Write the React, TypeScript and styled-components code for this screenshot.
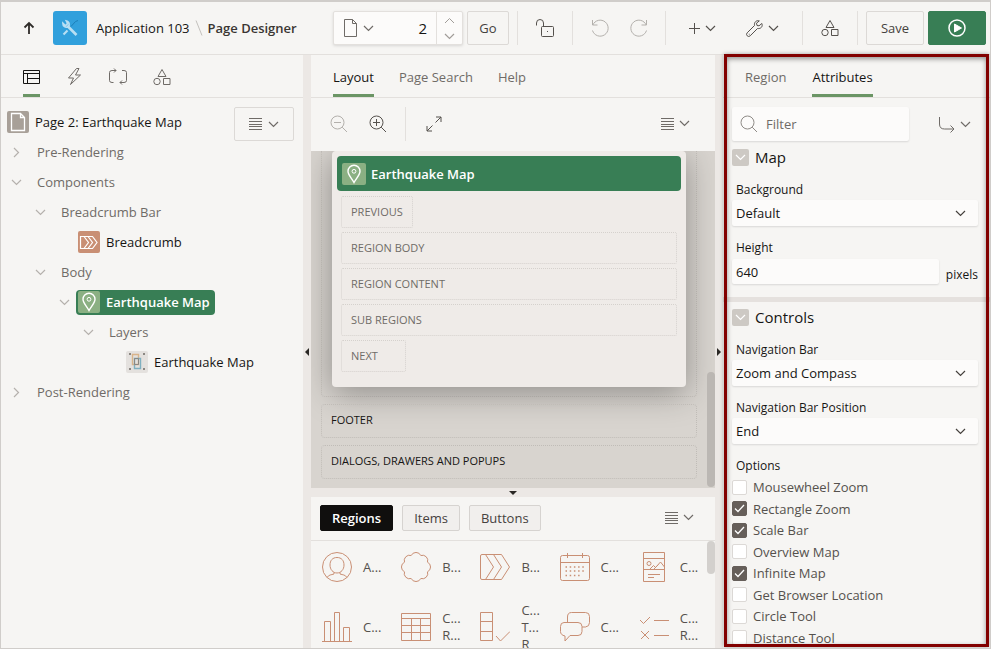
import React, { useState } from "react";
import styled, { createGlobalStyle } from "styled-components";

const c = {
  bg: "#f6f5f3",
  field: "#fcfbfa",
  line: "#e3e0dd",
  strip: "#ece8e5",
  text: "#161513",
  soft: "#6f6b67",
  faint: "#b3b0ac",
  green: "#387e55",
  tab: "#6b9565",
  clay: "#c98f74",
};

const GlobalStyle = createGlobalStyle`
  * { box-sizing: border-box; }
  body { margin: 0; background: ${c.bg}; }
  body, button, input, select {
    font-family: "Open Sans", "Noto Sans", sans-serif;
    font-size: 13px;
    line-height: 18px;
    color: ${c.text};
  }
  button { margin: 0; padding: 0; border: 0; background: none; cursor: pointer; }
  ul { list-style: none; margin: 0; padding: 0; }
`;

const Svg = styled.svg`
  display: block;
  flex: none;
  fill: none;
  stroke: currentColor;
  stroke-width: 1;
`;

type IconProps = { w: number; h: number; children: React.ReactNode };
const Icon = ({ w, h, children }: IconProps) => (
  <Svg width={w} height={h} viewBox={`0 0 ${w} ${h}`} aria-hidden="true">
    {children}
  </Svg>
);

const ChevronDown = () => (
  <Icon w={11} h={7}><path strokeWidth="1.200" d="M1 1l4.500 4.500L10 1" /></Icon>
);
const ChevronUp = () => (
  <Icon w={11} h={7}><path d="M1 6l4.500-4.500L10 6" /></Icon>
);
const ChevronRight = () => (
  <Icon w={7} h={11}><path strokeWidth="1.200" d="M1 1l4.500 4.500L1 10" /></Icon>
);
const Bars = () => (
  <Icon w={13} h={12}><path d="M0 .5h13M0 3.5h13M0 6.5h13M0 8.5h13M0 11.5h13" /></Icon>
);
const Shapes = () => (
  <Icon w={18} h={18}>
    <path d="M9 1.500l4 7H5z" />
    <circle cx="4" cy="13.500" r="3.200" />
    <path d="M10.500 10.500h6.500v6h-6.500z" />
  </Icon>
);
const Pin = () => (
  <Icon w={22} h={22}>
    <path strokeWidth="1.400" d="M11 19.500C9 15.500 5 12 5 8.300a6 6 0 0 1 12 0C17 12 13 15.500 11 19.500z" />
    <circle cx="11" cy="8.300" r="1.900" />
  </Icon>
);
const PageSheet = () => (
  <Icon w={22} h={22}>
    <path strokeWidth="1.300" d="M4.500 2.500h9l4 4v13h-13zM13.500 2.500v4h4" />
  </Icon>
);
const BreadcrumbMini = () => (
  <Icon w={22} h={22}>
    <path strokeWidth="1.200" d="M2.500 5.500h12l4.500 6-4.500 6h-12zM6 5.500l4.500 6-4.500 6M10 5.500l4.500 6-4.500 6" />
  </Icon>
);
const LayerMini = () => (
  <Icon w={22} h={22}>
    <path stroke="#d9b48a" strokeWidth="1.400" d="M6.500 3.500h6v10h-6z" />
    <path stroke="#7fb0c0" strokeWidth="1.400" d="M8.500 7.500h6v10h-6z" />
    <path stroke="#8b8782" d="M8.500 7.500h4v6h-4z" />
    <path stroke="#8b8782" strokeWidth="2" d="M3 3h2M17 3h2M3 18h2M17 18h2" />
  </Icon>
);

const Shell = styled.div`
  position: relative;
  height: 100vh;
  display: flex;
  flex-direction: column;
  overflow: hidden;
  background: ${c.bg};
  border: 1px solid #d0cdca;
  border-top-width: 2px;
`;

const Header = styled.header`
  flex: none;
  display: flex;
  align-items: center;
  height: 53px;
  padding: 0 4px 0 14px;
  border-bottom: 1px solid ${c.line};
`;
const Crumbs = styled.nav`
  flex: 1;
  display: flex;
  align-items: center;
  min-width: 0;
  white-space: nowrap;
`;
const UpButton = styled.button`
  width: 28px;
  height: 34px;
  display: grid;
  place-items: center;
  margin-right: 10px;
  color: #2f2c29;
`;
const AppTile = styled.span`
  display: grid;
  place-items: center;
  width: 34px;
  height: 34px;
  margin-right: 9px;
  border-radius: 3px;
  background: #31a0dc;
  color: #b9dff3;
`;
const CrumbLink = styled.a`
  color: ${c.text};
  text-decoration: none;
`;
const CrumbSlash = styled.span`
  width: 18px;
  display: grid;
  place-items: center;
  color: #c4c0bc;
`;
const CrumbCurrent = styled.strong`
  font-weight: 600;
  font-size: 13px;
  color: #3a3632;
`;
const PageSelector = styled.div`
  display: flex;
  width: 130px;
  height: 34px;
  border: 1px solid ${c.line};
  border-radius: 2px;
  background: ${c.field};
  box-shadow: 0 1px 3px rgba(0, 0, 0, 0.12);
`;
const PagePick = styled.button`
  display: flex;
  align-items: center;
  gap: 6px;
  padding-left: 10px;
  color: ${c.soft};
`;
const PageNumber = styled.input`
  flex: 1;
  min-width: 0;
  padding: 0 9px;
  border: 0;
  background: none;
  text-align: right;
  font-size: 15px;
`;
const Stepper = styled.div`
  display: grid;
  width: 26px;
  border-left: 1px solid ${c.line};
  color: #a19d99;
  button { display: grid; place-items: center; color: inherit; }
`;
const Button = styled.button<{ $w: number; $solid?: boolean }>`
  display: grid;
  place-items: center;
  width: ${(p) => p.$w}px;
  height: 34px;
  border: 1px solid ${(p) => (p.$solid ? c.green : "#dcd9d6")};
  border-radius: 2px;
  background: ${(p) => (p.$solid ? c.green : c.bg)};
  color: ${(p) => (p.$solid ? "#fff" : "#45413d")};
`;
const ToolGroup = styled.div<{ $w: number; $gap?: number; $muted?: boolean }>`
  display: flex;
  align-items: center;
  justify-content: center;
  gap: ${(p) => p.$gap ?? 0}px;
  width: ${(p) => p.$w}px;
  height: 34px;
  border-left: 1px solid ${c.line};
  color: ${(p) => (p.$muted ? c.faint : "#55514d")};
`;
const IconButton = styled.button`
  display: flex;
  align-items: center;
  gap: 5px;
  height: 34px;
  color: inherit;
`;
const Actions = styled.div`
  display: flex;
  gap: 4px;
`;
const SelectorActions = styled(Actions)`
  margin-right: 8px;
`;
const SaveActions = styled(Actions)`
  padding-left: 8px;
  border-left: 1px solid ${c.line};
`;

const Workspace = styled.div`
  flex: 1;
  min-height: 0;
  display: grid;
  grid-template-columns: 302px 8px minmax(0, 1fr) 8px 267px;
`;
const Column = styled.section`
  display: flex;
  flex-direction: column;
  min-width: 0;
  min-height: 0;
  overflow: hidden;
`;
const Splitter = styled.button<{ $row?: boolean }>`
  flex: none;
  display: grid;
  place-items: center;
  min-height: ${(p) => (p.$row ? "9px" : "0")};
  background: ${c.strip};
  color: #2b2825;
`;
const Tabs = styled.div<{ $gap: number }>`
  flex: none;
  display: flex;
  gap: ${(p) => p.$gap}px;
  height: 43px;
  padding-left: 22px;
  border-bottom: 1px solid ${c.line};
`;
const Tab = styled.button<{ $on?: boolean }>`
  display: flex;
  align-items: center;
  height: 42px;
  padding-top: 4px;
  border-bottom: 3px solid ${(p) => (p.$on ? c.tab : "transparent")};
  color: ${(p) => (p.$on ? c.text : c.soft)};
`;

const TreeArea = styled.div`
  display: flex;
  align-items: flex-start;
  padding: 9px 9px 0 4px;
`;
const Tree = styled.ul`
  flex: 1;
  min-width: 0;
`;
const TreeRow = styled.li<{ $level: number }>`
  display: flex;
  align-items: center;
  height: 30px;
  padding-left: ${(p) => p.$level * 24}px;
  white-space: nowrap;
`;
const Twisty = styled.button`
  flex: none;
  display: grid;
  place-items: center;
  width: 23px;
  height: 24px;
  color: #b5b1ad;
`;
const LeafIndent = styled.span`
  flex: none;
  width: 23px;
`;
const Branch = styled.span`
  padding-left: 9px;
  color: ${c.soft};
`;
const Leaf = styled.span<{ $on?: boolean }>`
  display: flex;
  align-items: center;
  gap: 6px;
  height: 25px;
  padding: 0 5px 0 2px;
  border-radius: 4px;
  background: ${(p) => (p.$on ? c.green : "transparent")};
  color: ${(p) => (p.$on ? "#fff" : c.text)};
  font-weight: ${(p) => (p.$on ? 600 : 400)};
`;
const Tile = styled.span<{ $bg: string; $w?: number }>`
  flex: none;
  display: grid;
  place-items: center;
  width: ${(p) => p.$w ?? 22}px;
  height: 22px;
  border-radius: 2px;
  background: ${(p) => p.$bg};
  color: #fff;
`;
const MenuButton = styled.button`
  flex: none;
  display: flex;
  align-items: center;
  justify-content: center;
  gap: 6px;
  width: 60px;
  height: 34px;
  border: 1px solid #dcd9d6;
  border-radius: 2px;
  color: ${c.soft};
`;

const CanvasTools = styled.div`
  flex: none;
  display: flex;
  align-items: center;
  height: 53px;
  padding: 0 25px 2px 19px;
  color: #55514d;
`;
const ZoomOutButton = styled(IconButton)`
  color: ${c.faint};
  margin-right: 21px;
`;
const ExpandButton = styled(IconButton)`
  margin-left: 18px;
  padding-left: 20px;
  border-left: 1px solid ${c.line};
`;
const EndMenu = styled(IconButton)`
  margin-left: auto;
  color: ${c.soft};
`;
const Canvas = styled.div`
  position: relative;
  flex: 1;
  min-height: 0;
  overflow: hidden;
  padding: 0 18px 0 10px;
  background: #d8d4cf;
`;
const BodySlot = styled.div`
  padding: 0 10px 9px;
  border: 1px dotted #c5c1bc;
  border-top: 0;
  border-radius: 0 0 4px 4px;
`;
const RegionCard = styled.div`
  padding: 5px 5px 15px;
  border-radius: 4px;
  background: #efebe8;
  box-shadow: 0 6px 32px rgba(0, 0, 0, 0.34);
`;
const RegionTitle = styled.div`
  display: flex;
  align-items: center;
  gap: 5px;
  height: 35px;
  padding-left: 5px;
  border-radius: 4px;
  background: ${c.green};
  color: #fff;
  font-weight: 600;
`;
const SlotList = styled.div`
  display: flex;
  flex-direction: column;
  align-items: flex-start;
  gap: 4px;
  padding: 5px 4px 0;
`;
const Slot = styled.div<{ $wide?: boolean }>`
  width: ${(p) => (p.$wide ? "100%" : "auto")};
  min-width: 65px;
  height: 32px;
  padding: 0 9px;
  border: 1px dotted #d5d1cd;
  border-radius: 2px;
  font-size: 11px;
  line-height: 29px;
  color: ${c.soft};
`;
const PageSlot = styled.div`
  height: 34px;
  margin-top: 7px;
  padding: 0 9px;
  border: 1px dotted #c0bcb7;
  border-radius: 4px;
  font-size: 11px;
  line-height: 30px;
`;
const Thumb = styled.div<{ $h: number; $end?: boolean }>`
  position: absolute;
  right: 0;
  ${(p) => (p.$end ? "bottom: 1px;" : "top: 0;")}
  width: 8px;
  height: ${(p) => p.$h}px;
  border-radius: 4px;
  background: ${(p) => (p.$end ? "#bbb7b3" : "#d3d0cd")};
`;

const GalleryBar = styled.div`
  flex: none;
  display: flex;
  align-items: center;
  gap: 9px;
  height: 44px;
  padding: 0 21px 2px 9px;
  border-bottom: 1px solid ${c.line};
`;
const Chip = styled.button<{ $on?: boolean }>`
  height: 26px;
  padding: 0 11px;
  border: 1px solid ${(p) => (p.$on ? "#100f0e" : "#d6d3d0")};
  border-radius: 2px;
  background: ${(p) => (p.$on ? "#100f0e" : "#f1efed")};
  color: ${(p) => (p.$on ? "#fff" : "#45413d")};
  font-weight: ${(p) => (p.$on ? 600 : 400)};
`;
const Gallery = styled.div`
  position: relative;
  flex: none;
  display: grid;
  grid-template-columns: repeat(5, minmax(0, 1fr));
  grid-auto-rows: 52px;
  row-gap: 8px;
  height: 107px;
  padding-right: 8px;
  overflow: hidden;
`;
const GalleryItem = styled.button`
  display: flex;
  align-items: center;
  gap: 11px;
  padding-left: 11px;
  color: ${c.clay};
  text-align: left;
`;
const GalleryLabel = styled.span`
  display: grid;
  line-height: 17px;
  color: #55514d;
`;

const FilterRow = styled.div`
  flex: none;
  display: flex;
  align-items: center;
  justify-content: space-between;
  padding: 9px 19px 1px 9px;
  color: ${c.soft};
`;
const FilterBox = styled.label`
  display: flex;
  align-items: center;
  gap: 8px;
  width: 177px;
  height: 34px;
  padding-left: 8px;
  border-radius: 2px;
  background: ${c.field};
  box-shadow: 0 1px 2px rgba(0, 0, 0, 0.12);
  color: #8f8b87;
`;
const FilterInput = styled.input`
  flex: 1;
  min-width: 0;
  padding: 0;
  border: 0;
  background: none;
  &::placeholder { color: ${c.soft}; opacity: 1; }
`;
const Group = styled.section`
  padding: 4px 12px 13px 9px;
  & + & { border-top: 5px solid #e5e1de; }
`;
const GroupTitle = styled.h2`
  display: flex;
  align-items: center;
  gap: 6px;
  height: 22px;
  margin: 0 0 13px;
  font-size: 15px;
  line-height: 22px;
  font-weight: 500;
`;
const Fold = styled.button`
  display: grid;
  place-items: center;
  width: 17px;
  height: 17px;
  border-radius: 2px;
  background: #cdc9c4;
  color: #fff;
`;
const Field = styled.div`
  display: flex;
  flex-direction: column;
  margin-bottom: 13px;
`;
const FieldLabel = styled.label`
  display: block;
  padding-left: 4px;
  font-size: 12px;
  line-height: 18px;
`;
const FieldLine = styled.div`
  display: flex;
  align-items: flex-end;
  gap: 7px;
  margin-top: 2px;
`;
const TextInput = styled.input`
  flex: 1;
  min-width: 0;
  height: 25px;
  padding: 0 4px;
  border: 0;
  border-radius: 2px;
  background: ${c.field};
  box-shadow: 0 1px 2px rgba(0, 0, 0, 0.12);
`;
const Unit = styled.span`
  font-size: 12px;
  line-height: 18px;
`;
const SelectBox = styled.div`
  display: grid;
  margin-top: 1px;
  align-items: center;
  color: #45413d;
  & > * { grid-area: 1 / 1; }
  & > svg { justify-self: end; margin-right: 12px; pointer-events: none; }
`;
const Select = styled.select`
  appearance: none;
  width: 100%;
  height: 26px;
  padding: 0 4px;
  border: 0;
  border-radius: 2px;
  background: ${c.field};
  box-shadow: 0 1px 2px rgba(0, 0, 0, 0.12);
`;
const Options = styled.fieldset`
  display: grid;
  grid-auto-rows: 22px 21px;
  margin: 0;
  padding: 0;
  border: 0;
`;
const Legend = styled.legend`
  padding: 0 4px 1px;
  font-size: 12px;
  line-height: 18px;
`;
const Option = styled.label`
  display: flex;
  align-items: center;
  gap: 6px;
  color: #55514d;
`;
const CheckBox = styled.span`
  display: grid;
  width: 15px;
  height: 15px;
  color: #fff;
  & > * { grid-area: 1 / 1; }
  & > svg { pointer-events: none; }
`;
const Check = styled.input`
  appearance: none;
  width: 15px;
  height: 15px;
  margin: 0;
  border: 1px solid #dcd9d6;
  border-radius: 2px;
  background: #fff;
  &:checked { border-color: #665f5a; background: #665f5a; }
`;
const Callout = styled.div`
  position: absolute;
  top: 52px;
  right: 1px;
  bottom: 1px;
  width: 265px;
  border: 3px solid #820000;
  box-shadow: 0 0 4px rgba(0, 0, 0, 0.35), inset 0 2px 5px rgba(0, 0, 0, 0.4);
  pointer-events: none;
`;

const Magnifier = ({ sign }: { sign?: "minus" | "plus" }) => (
  <Icon w={18} h={18}>
    <circle cx="7.500" cy="7.500" r="6.500" />
    <path d="M12.200 12.200L17 17" />
    {sign && <path d="M4 7.500h7" />}
    {sign === "plus" && <path d="M7.500 4v7" />}
  </Icon>
);

const gallery: { name: string; lines: string[]; art: React.ReactNode }[] = [
  { name: "Avatar", lines: ["A..."], art: (
    <><circle cx="15" cy="15" r="14.500" /><path d="M15 5.500c4.500 0 7 3 7 7.500s-3 8-7 8-7-3.500-7-8 2.500-7.500 7-7.500zM5 25.500c2-3 4-2.500 7-3.500v-1.500M25 25.500c-2-3-4-2.500-7-3.500v-1.500" /></>
  ) },
  { name: "Badge List", lines: ["B..."], art: (
    <path d="M10.200 3.500A5.300 5.300 0 0 1 19.800 3.500A5.300 5.300 0 0 1 26.500 10.200A5.300 5.300 0 0 1 26.500 19.800A5.300 5.300 0 0 1 19.800 26.500A5.300 5.300 0 0 1 10.200 26.500A5.300 5.300 0 0 1 3.500 19.800A5.300 5.300 0 0 1 3.500 10.200A5.300 5.300 0 0 1 10.200 3.500z" />
  ) },
  { name: "Breadcrumb", lines: ["B..."], art: (
    <path d="M.500 4q0-1.500 1.500-1.500h19.500L29.500 15l-8 12.500H2q-1.500 0-1.500-1.500zM5.500 2.500L13.500 15l-8 12.500M13.500 2.500L21.500 15l-8 12.500" />
  ) },
  { name: "Calendar", lines: ["C..."], art: (
    <><rect x=".500" y="3.500" width="29" height="25" rx="2" /><path d="M.500 10.500h29M7.500 1v5M22.500 1v5" /><path strokeWidth="1.500" strokeDasharray="1.500 2.700" d="M5.500 15H25M5.500 19H25M5.500 23.500H21" /></>
  ) },
  { name: "Cards", lines: ["C..."], art: (
    <path d="M4.500.500h21v29h-21zM4.500 6.500h21M4.500 17.500h21M8 11.500a2 2 0 1 0 4 0a2 2 0 1 0-4 0M10.500 17.500l4-4 2 2 5-5.500 4 5M14.500 17.500l5-5M9 22.500h12M9 25.500h6" />
  ) },
  { name: "Chart", lines: ["C..."], art: (
    <path d="M0 29.500h30M2.500 29.500v-20h6v20M12.500 29.500V.500h5v29M21.500 29.500v-14h6v14" />
  ) },
  { name: "Classic Report", lines: ["C...", "R..."], art: (
    <path d="M.500 1.500h29v27H.500zM.500 6.500h29M.500 13.500h29M.500 20.500h29M10.500 6.500v22M19.500 6.500v22" />
  ) },
  { name: "Column Toggle Report", lines: ["C...", "T...", "R"], art: (
    <path d="M.500.500h12v28H.500zM.500 9.500h12M.500 19.500h12M16 24l4.500 5L30 19.500" />
  ) },
  { name: "Comments", lines: ["C..."], art: (
    <><path d="M4 10.500h14q4 0 4 4v5q0 4-4 4h-8l-5 5.500V24q-4.500-1-4.500-4.500v-5q0-4 3.500-4z" /><path d="M7.500 10.500V5q0-4.500 4-4.500h14q4 0 4 4v6q0 4-4 4.500h-3.500" /></>
  ) },
  { name: "Content Row", lines: ["C...", "R..."], art: (
    <path d="M1 8l3.500 3.500L11 5M15 8.500h15M2 19l8 8M10 19l-8 8M15 23.500h15" />
  ) },
];

type SelectFieldProps = { id: string; label: string; value: string };
const SelectField = ({ id, label, value }: SelectFieldProps) => (
  <Field>
    <FieldLabel htmlFor={id}>{label}</FieldLabel>
    <SelectBox>
      <Select id={id} defaultValue={value}>
        <option>{value}</option>
      </Select>
      <ChevronDown />
    </SelectBox>
  </Field>
);

const initialOptions = [
  { label: "Mousewheel Zoom", on: false },
  { label: "Rectangle Zoom", on: true },
  { label: "Scale Bar", on: true },
  { label: "Overview Map", on: false },
  { label: "Infinite Map", on: true },
  { label: "Get Browser Location", on: false },
  { label: "Circle Tool", on: false },
  { label: "Distance Tool", on: false },
];

const TopBar = () => (
  <Header>
    <Crumbs aria-label="Breadcrumb">
      <UpButton aria-label="Up">
        <Icon w={12} h={14}><path strokeWidth="1.800" d="M6 13V2M1.500 6.500L6 2l4.500 4.500" /></Icon>
      </UpButton>
      <AppTile>
        <Icon w={18} h={18}>
          <path stroke="#1b7fb8" d="M17 1.500l-2.500 1-4.500 5" />
          <path strokeWidth="2.200" d="M2.500 15.500L6.500 11.500" />
          <path strokeWidth="2.600" d="M7 7.500l8.500 8.500" />
          <path strokeWidth="1.800" d="M5.500 2c2 .500 3 2.500 2.500 4.500L6.500 8C4 8.500 2 7 2 4.500l2 2 1.800-.700.700-1.800z" />
        </Icon>
      </AppTile>
      <CrumbLink href="#app">Application 103</CrumbLink>
      <CrumbSlash><Icon w={8} h={16}><path d="M1 .500l6 15" /></Icon></CrumbSlash>
      <CrumbCurrent>Page Designer</CrumbCurrent>
    </Crumbs>
    <SelectorActions>
      <PageSelector>
        <PagePick aria-label="Page list">
          <Icon w={13} h={18}><path d="M.500.500h8l4 4v13H.500zM8.500.500v4h4" /></Icon>
          <ChevronDown />
        </PagePick>
        <PageNumber aria-label="Page number" defaultValue="2" />
        <Stepper>
          <button aria-label="Next page"><ChevronUp /></button>
          <button aria-label="Previous page"><ChevronDown /></button>
        </Stepper>
      </PageSelector>
      <Button $w={42}>Go</Button>
    </SelectorActions>
    <ToolGroup $w={55}>
      <IconButton aria-label="Lock page">
        <Icon w={18} h={18}>
          <rect x="5.500" y="7.500" width="12" height="10" rx="1" />
          <path d="M.500 6.500V4a3.500 3.500 0 0 1 7 0v3.500M11 12.500h1" />
        </Icon>
      </IconButton>
    </ToolGroup>
    <ToolGroup $w={93} $gap={21} $muted>
      <IconButton aria-label="Undo">
        <Icon w={18} h={18}><path d="M1.500 1v5h5M1.800 6a8 8 0 1 1-.3 5.500" /></Icon>
      </IconButton>
      <IconButton aria-label="Redo">
        <Icon w={18} h={18}><path d="M16.500 1v5h-5M16.200 6a8 8 0 1 0 .3 5.500" /></Icon>
      </IconButton>
    </ToolGroup>
    <ToolGroup $w={137} $gap={30}>
      <IconButton aria-label="Create">
        <Icon w={11} h={11}><path d="M5.500 0v11M0 5.500h11" /></Icon>
        <ChevronDown />
      </IconButton>
      <IconButton aria-label="Utilities">
        <Icon w={17} h={17}>
          <path d="M15.900 3.500l-2.900 2.300-2-.3-.5-2.300L13.300.900C10.500 0 8 2 8.500 5.500L1.200 12.800a2.100 2.100 0 0 0 3 3L11.500 8.500c3.500.5 5.500-2 4.400-5zM2.800 14.200h.8" />
        </Icon>
        <ChevronDown />
      </IconButton>
    </ToolGroup>
    <ToolGroup $w={55}>
      <IconButton aria-label="Shared components"><Shapes /></IconButton>
    </ToolGroup>
    <SaveActions>
      <Button $w={58}>Save</Button>
      <Button $w={58} $solid aria-label="Save and run page">
        <Icon w={18} h={18}>
          <circle cx="9" cy="9" r="8" strokeWidth="1.500" />
          <path d="M6.500 5l7 4-7 4z" fill="currentColor" />
        </Icon>
      </Button>
    </SaveActions>
  </Header>
);

const BranchRow = ({ level, label, open }: { level: number; label: string; open?: boolean }) => (
  <TreeRow $level={level}>
    <Twisty aria-label={`Toggle ${label}`}>{open ? <ChevronDown /> : <ChevronRight />}</Twisty>
    <Branch>{label}</Branch>
  </TreeRow>
);

const TreePanel = () => (
  <Column>
    <Tabs $gap={26}>
      <Tab $on aria-label="Rendering">
        <Icon w={17} h={14}><path d="M.500.500h16v13H.500zM.500 3.500h16M4.500 3.500v10M4.500 8.500h12" /></Icon>
      </Tab>
      <Tab aria-label="Dynamic actions">
        <Icon w={17} h={17}><path d="M10.500.500L2.500 10h5l-3 6.500L14.500 7H9.500L13 .500z" /></Icon>
      </Tab>
      <Tab aria-label="Processing">
        <Icon w={18} h={17}>
          <path d="M7 2.500H3q-2.500 0-2.500 2v8q0 2 2.500 2h1.500M5 .500l2 2-2 2M11 14.500h4q2.500 0 2.500-2v-8q0-2-2.500-2h-2M13 12.500l-2 2 2 2" />
        </Icon>
      </Tab>
      <Tab aria-label="Page shared components"><Shapes /></Tab>
    </Tabs>
    <TreeArea>
      <Tree>
        <TreeRow $level={0}>
          <Leaf><Tile $bg="#a8a098"><PageSheet /></Tile>Page 2: Earthquake Map</Leaf>
        </TreeRow>
        <BranchRow level={0} label="Pre-Rendering" />
        <BranchRow level={0} label="Components" open />
        <BranchRow level={1} label="Breadcrumb Bar" open />
        <TreeRow $level={2}>
          <LeafIndent />
          <Leaf><Tile $bg={c.clay}><BreadcrumbMini /></Tile>Breadcrumb</Leaf>
        </TreeRow>
        <BranchRow level={1} label="Body" open />
        <TreeRow $level={2}>
          <Twisty aria-label="Toggle Earthquake Map"><ChevronDown /></Twisty>
          <Leaf $on><Tile $bg="#8bb083"><Pin /></Tile>Earthquake Map</Leaf>
        </TreeRow>
        <BranchRow level={3} label="Layers" open />
        <TreeRow $level={4}>
          <LeafIndent />
          <Leaf><Tile $bg="#e4e1de"><LayerMini /></Tile>Earthquake Map</Leaf>
        </TreeRow>
        <BranchRow level={0} label="Post-Rendering" />
      </Tree>
      <MenuButton aria-label="Tree menu"><Bars /><ChevronDown /></MenuButton>
    </TreeArea>
  </Column>
);

const LayoutPanel = () => (
  <Column>
    <Tabs $gap={25}>
      <Tab $on>Layout</Tab>
      <Tab>Page Search</Tab>
      <Tab>Help</Tab>
    </Tabs>
    <CanvasTools>
      <ZoomOutButton aria-label="Zoom out"><Magnifier sign="minus" /></ZoomOutButton>
      <IconButton aria-label="Zoom in"><Magnifier sign="plus" /></IconButton>
      <ExpandButton aria-label="Expand">
        <Icon w={16} h={16}><path d="M1 15l5.500-5.500M9.500 6.500L15 1M10 1h5v5M6 15H1v-5" /></Icon>
      </ExpandButton>
      <EndMenu aria-label="Layout menu"><Bars /><ChevronDown /></EndMenu>
    </CanvasTools>
    <Canvas>
      <BodySlot>
        <RegionCard>
          <RegionTitle><Tile $bg="#8bb083" $w={24}><Pin /></Tile>Earthquake Map</RegionTitle>
          <SlotList>
            <Slot>PREVIOUS</Slot>
            <Slot $wide>REGION BODY</Slot>
            <Slot $wide>REGION CONTENT</Slot>
            <Slot $wide>SUB REGIONS</Slot>
            <Slot>NEXT</Slot>
          </SlotList>
        </RegionCard>
      </BodySlot>
      <PageSlot>FOOTER</PageSlot>
      <PageSlot>DIALOGS, DRAWERS AND POPUPS</PageSlot>
      <Thumb $h={115} $end />
    </Canvas>
    <Splitter $row aria-label="Collapse gallery">
      <Icon w={8} h={4}><path stroke="none" fill="currentColor" d="M0 0h8L4 4z" /></Icon>
    </Splitter>
    <GalleryBar>
      <Chip $on>Regions</Chip>
      <Chip>Items</Chip>
      <Chip>Buttons</Chip>
      <EndMenu aria-label="Gallery menu"><Bars /><ChevronDown /></EndMenu>
    </GalleryBar>
    <Gallery>
      {gallery.map((g) => (
        <GalleryItem key={g.name} title={g.name}>
          <Icon w={30} h={30}>{g.art}</Icon>
          <GalleryLabel>
            {g.lines.map((line) => <span key={line}>{line}</span>)}
          </GalleryLabel>
        </GalleryItem>
      ))}
      <Thumb $h={33} />
    </Gallery>
  </Column>
);

const PropertyPanel = () => {
  const [options, setOptions] = useState(initialOptions);
  const toggle = (label: string) =>
    setOptions(options.map((o) => (o.label === label ? { ...o, on: !o.on } : o)));
  return (
    <Column>
      <Tabs $gap={26}>
        <Tab>Region</Tab>
        <Tab $on>Attributes</Tab>
      </Tabs>
      <FilterRow>
        <FilterBox>
          <Magnifier />
          <FilterInput aria-label="Filter" placeholder="Filter" />
        </FilterBox>
        <IconButton aria-label="Go to group">
          <Icon w={17} h={17}><path d="M1.500 1v7q0 5 5 5h9M12.500 9.500l3.500 3.500-3.500 3.500" /></Icon>
          <ChevronDown />
        </IconButton>
      </FilterRow>
      <Group>
        <GroupTitle><Fold aria-label="Toggle Map"><ChevronDown /></Fold>Map</GroupTitle>
        <SelectField id="background" label="Background" value="Default" />
        <FieldLabel htmlFor="height">Height</FieldLabel>
        <FieldLine>
          <TextInput id="height" defaultValue="640" />
          <Unit>pixels</Unit>
        </FieldLine>
      </Group>
      <Group>
        <GroupTitle><Fold aria-label="Toggle Controls"><ChevronDown /></Fold>Controls</GroupTitle>
        <SelectField id="nav-bar" label="Navigation Bar" value="Zoom and Compass" />
        <SelectField id="nav-position" label="Navigation Bar Position" value="End" />
        <Options>
          <Legend>Options</Legend>
          {options.map((o) => (
            <Option key={o.label}>
              <CheckBox>
                <Check type="checkbox" checked={o.on} onChange={() => toggle(o.label)} />
                {o.on && <Icon w={15} h={15}><path strokeWidth="1.300" d="M3 7.500l3 3 6-6.500" /></Icon>}
              </CheckBox>
              {o.label}
            </Option>
          ))}
        </Options>
      </Group>
    </Column>
  );
};

export default function App() {
  return (
    <Shell>
      <GlobalStyle />
      <TopBar />
      <Workspace>
        <TreePanel />
        <Splitter aria-label="Collapse tree">
          <Icon w={4} h={8}><path stroke="none" fill="currentColor" d="M4 0v8L0 4z" /></Icon>
        </Splitter>
        <LayoutPanel />
        <Splitter aria-label="Collapse properties">
          <Icon w={4} h={8}><path stroke="none" fill="currentColor" d="M0 0v8l4-4z" /></Icon>
        </Splitter>
        <PropertyPanel />
      </Workspace>
      <Callout />
    </Shell>
  );
}
